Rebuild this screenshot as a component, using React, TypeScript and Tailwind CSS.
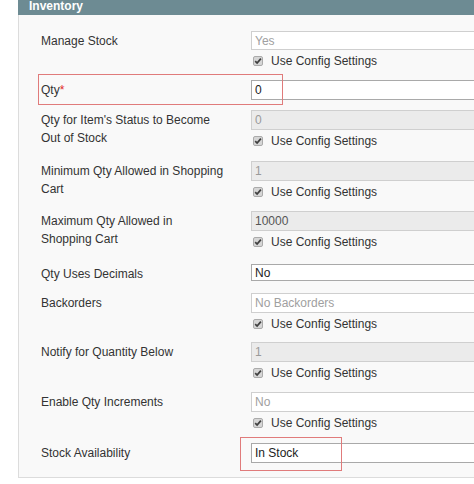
import React from "react"

type Field = {
  label: string
  value: string
  kind: "off" | "offSelect" | "on"
  mute?: boolean
  cfg?: boolean
  mt: string
  h?: string
  mark?: "qty" | "stock"
}

const fields: Field[] = [
  { label: "Manage Stock", value: "Yes", kind: "offSelect", cfg: true, mt: "mt-0", h: "h-[19px]" },
  { label: "Qty", value: "0", kind: "on", mt: "mt-[10px]", mark: "qty" },
  { label: "Qty for Item's Status to Become Out of Stock", value: "0", kind: "off", mute: true, cfg: true, mt: "mt-[10px]" },
  { label: "Minimum Qty Allowed in Shopping Cart", value: "1", kind: "off", mute: true, cfg: true, mt: "mt-[11px]" },
  { label: "Maximum Qty Allowed in Shopping Cart", value: "10000", kind: "off", cfg: true, mt: "mt-[10px]" },
  { label: "Qty Uses Decimals", value: "No", kind: "on", mt: "mt-[13px]", h: "h-[17px]" },
  { label: "Backorders", value: "No Backorders", kind: "offSelect", cfg: true, mt: "mt-[10px]" },
  { label: "Notify for Quantity Below", value: "1", kind: "off", mute: true, cfg: true, mt: "mt-[9px]" },
  { label: "Enable Qty Increments", value: "No", kind: "offSelect", cfg: true, mt: "mt-[10px]" },
  { label: "Stock Availability", value: "In Stock", kind: "on", mt: "mt-[11px]", mark: "stock" },
]

function ConfigCheck() {
  return (
    <div className="mt-[2px] flex h-[18px] items-center pl-[2px]">
      <span className="flex h-[10px] w-[10px] items-center justify-center rounded-[2px] border border-[#ababab] bg-[#d6d6d6]">
        <svg width="8" height="8" viewBox="0 0 8 8">
          <path d="M1.2 4.2 L3.1 6.1 L6.9 1.6" fill="none" stroke="#3f3f3f" strokeWidth="1.7" />
        </svg>
      </span>
      <span className="ml-[8px] text-[12px] text-[#333]">Use Config Settings</span>
    </div>
  )
}

function Control({ f }: { f: Field }) {
  let box = "border-[#cfcfcf] bg-white text-[#a0a0a0]"
  if (f.kind === "off") box = f.mute ? "border-[#cfcfcf] bg-[#ebebeb] text-[#9a9a9a]" : "border-[#cfcfcf] bg-[#ebebeb] text-[#555]"
  if (f.kind === "on") box = "border-[#a9a9a9] bg-white text-[#222]"
  return (
    <div className={`flex ${f.h ?? "h-[20px]"} items-center border pl-[3px] text-[12px] ${box}`}>
      {f.value}
    </div>
  )
}

export default function App() {
  return (
    <div
      className="h-[484px] w-[474px] overflow-hidden bg-white"
      style={{ fontFamily: '"Liberation Sans", Arial, sans-serif' }}
    >
      <div className="ml-[18px] w-[580px]">
        <div className="flex h-[15px] items-start bg-[#6d8b93] pl-[11px]">
          <div className="text-[12px] font-bold leading-[13px] text-white">Inventory</div>
        </div>
        <div className="border-b border-l border-[#dcdcdc] bg-[#f9f9f9] pb-[14px] pt-[16px]">
          {fields.map((f) => (
            <div key={f.label} className={`relative flex pl-[22px] ${f.mt}`}>
              {f.mark === "qty" && (
                <div className="absolute left-[19px] top-[-6px] h-[31px] w-[245px] border border-[#e07b7b]" />
              )}
              {f.mark === "stock" && (
                <div className="absolute left-[221px] top-[-6px] h-[34px] w-[102px] border border-[#e07b7b]" />
              )}
              <div className="w-[210px] pr-[25px] pt-[1px] text-[12px] leading-[18px] text-[#333]">
                {f.label}
                {f.mark === "qty" && <span className="text-[#e22626]">*</span>}
              </div>
              <div className="flex-1">
                <Control f={f} />
                {f.cfg && <ConfigCheck />}
              </div>
            </div>
          ))}
        </div>
      </div>
    </div>
  )
}
